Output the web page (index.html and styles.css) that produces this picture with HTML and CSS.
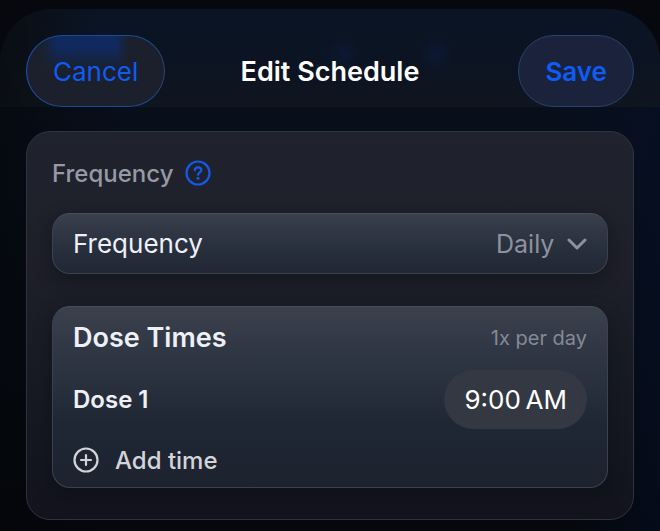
FILE: index.html
```html
<!DOCTYPE html>
<html lang="en">
  <head>
    <meta charset="UTF-8" />
    <meta name="viewport" content="width=device-width, initial-scale=1.0" />
    <title>Edit Schedule</title>
    <link rel="stylesheet" href="styles.css">
  </head>
  <body>
    <div class="sheet">
      <header class="topbar">
        <button class="pill cancel" type="button">Cancel</button>
        <h1 class="title">Edit Schedule</h1>
        <button class="pill save" type="button">Save</button>
      </header>
      <main class="card">
        <div class="section-head">
          <h2 class="section-title">Frequency</h2>
          <button class="help" type="button" aria-label="About frequency">
            <svg width="26" height="26" viewBox="0 0 26 26" fill="none" stroke="currentColor" stroke-width="2.2" stroke-linecap="round" stroke-linejoin="round">
              <circle cx="13" cy="13" r="11.5" />
              <path d="M9.800 10.200C10 8.300 11.200 7.400 13 7.400c1.900 0 3.300 1.100 3.300 2.700 0 1.300-.8 2-1.800 2.600-1 .6-1.400 1.100-1.400 2.100" />
              <circle cx="13" cy="18.200" r="1.500" fill="currentColor" stroke="none" />
            </svg>
          </button>
        </div>
        <div class="panel select-row">
          <label for="frequency">Frequency</label>
          <div class="select-wrap">
            <select id="frequency">
              <option>Daily</option>
            </select>
            <svg class="chevron" width="20" height="12" viewBox="0 0 20 12" fill="none" stroke="currentColor" stroke-width="3" stroke-linecap="round" stroke-linejoin="round">
              <path d="M2 2l8 8 8-8" />
            </svg>
          </div>
        </div>
        <section class="panel doses">
          <div class="row">
            <h3 class="dose-title">Dose Times</h3>
            <span class="count">1x per day</span>
          </div>
          <div class="row dose">
            <span class="dose-name" id="dose1">Dose 1</span>
            <button class="time" type="button" aria-describedby="dose1">9:00&#8239;AM</button>
          </div>
          <button class="add" type="button">
            <svg width="26" height="26" viewBox="0 0 26 26" fill="none" stroke="currentColor" stroke-width="2.2" stroke-linecap="round">
              <circle cx="13" cy="13" r="11.5" />
              <path d="M13 8v10M8 13h10" />
            </svg>
            Add time
          </button>
        </section>
      </main>
    </div>
  </body>
</html>
```

FILE: styles.css
```css
* {
  box-sizing: border-box;
  margin: 0;
  padding: 0;
}
body {
  min-height: 100vh;
  padding-top: 9px;
  background-color: #07080e;
  color: #eef0f8;
  font-family: Inter, "Liberation Sans", sans-serif;
  font-size: 26px;
}
button,
select {
  border: none;
  background: none;
  color: inherit;
  font: inherit;
}
svg {
  display: block;
}
.sheet {
  min-height: calc(100vh - 9px);
  padding-bottom: 10px;
  border-radius: 52px 52px 0 0;
  background:
    linear-gradient(90deg, rgba(4, 6, 10, 0.6), rgba(4, 6, 10, 0) 20%, rgba(4, 6, 10, 0) 85%, rgba(4, 16, 44, 0.4)),
    linear-gradient(#09111e, #080e1a 30%, #05070c);
}
.topbar {
  display: grid;
  grid-template-columns: 1fr auto 1fr;
  align-items: center;
  padding: 26px 26px 0;
  border-radius: 52px 52px 0 0;
  background:
    radial-gradient(circle at 52% 46%, rgba(14, 34, 100, 0.25), transparent 18px),
    radial-gradient(circle at 66% 46%, rgba(14, 34, 100, 0.25), transparent 18px),
    linear-gradient(90deg, rgba(10, 13, 18, 0.9), rgba(10, 13, 18, 0) 15%),
    linear-gradient(#0a1424, #0c1422 60%, #10151f);
}
.title {
  font-size: 27px;
  font-weight: 600;
  color: #fff;
}
.pill {
  height: 72px;
  padding: 0 26px;
  border: 1px solid #2b4070;
  border-radius: 36px;
  color: #0f5cf5;
}
.cancel {
  justify-self: start;
  border-color: #1d4a96 #2c476f #1d4a96 #1d55b8;
  /* blue glow behind the top left of the button */
  background:
    linear-gradient(#1b202c00 15%, #1b202c 50%),
    linear-gradient(90deg, #1b202c 10%, #10295f 22%, #10295f 65%, #1b202c 74%);
}
.save {
  justify-self: end;
  background-color: #1a233b;
  font-weight: 600;
}
.card {
  margin: 24px 26px 0;
  padding: 25px 25px 31px;
  border: 1px solid #30333f;
  border-radius: 24px;
  background: linear-gradient(#20232e, #1e1f29 35%, #181b24 60%, #12131d);
}
.section-head {
  display: flex;
  align-items: center;
  gap: 12px;
  height: 32px;
}
.section-title {
  font-size: 24px;
  font-weight: 500;
  color: #9799a4;
}
.help {
  color: #1559e8;
}
.panel {
  border: 1px solid #3b414f;
  border-top-color: #464c59;
  border-radius: 18px;
  background: linear-gradient(#3a404c, #2a313f 40%, #1f2735 65%, #1d222e);
  box-shadow: 0 6px 18px rgba(8, 12, 16, 0.4);
}
.select-row {
  display: flex;
  align-items: center;
  justify-content: space-between;
  height: 61px;
  margin-top: 24px;
  padding: 0 20px;
  background: linear-gradient(#3a404c, #2a313f 50%, #212734);
}
.select-wrap {
  display: flex;
  align-items: center;
  gap: 12px;
  color: #8e929e;
}
.select-wrap select {
  appearance: none;
  font-size: 25px;
}
.doses {
  margin-top: 32px;
  padding: 14px 20px 7px;
}
.row {
  display: flex;
  align-items: center;
  justify-content: space-between;
}
.dose {
  margin: 16px 0 11px;
}
.dose-title {
  font-size: 27px;
  font-weight: 600;
  line-height: 33px;
}
.count {
  font-size: 20px;
  color: #858a96;
}
.dose-name {
  font-size: 24px;
  font-weight: 600;
}
.time {
  height: 59px;
  padding: 0 20px;
  border-radius: 30px;
  background-color: #343843;
  color: #fff;
}
.add {
  display: flex;
  align-items: center;
  gap: 16px;
  height: 40px;
  color: #d2d4d8;
  font-size: 24px;
  font-weight: 500;
}
```
